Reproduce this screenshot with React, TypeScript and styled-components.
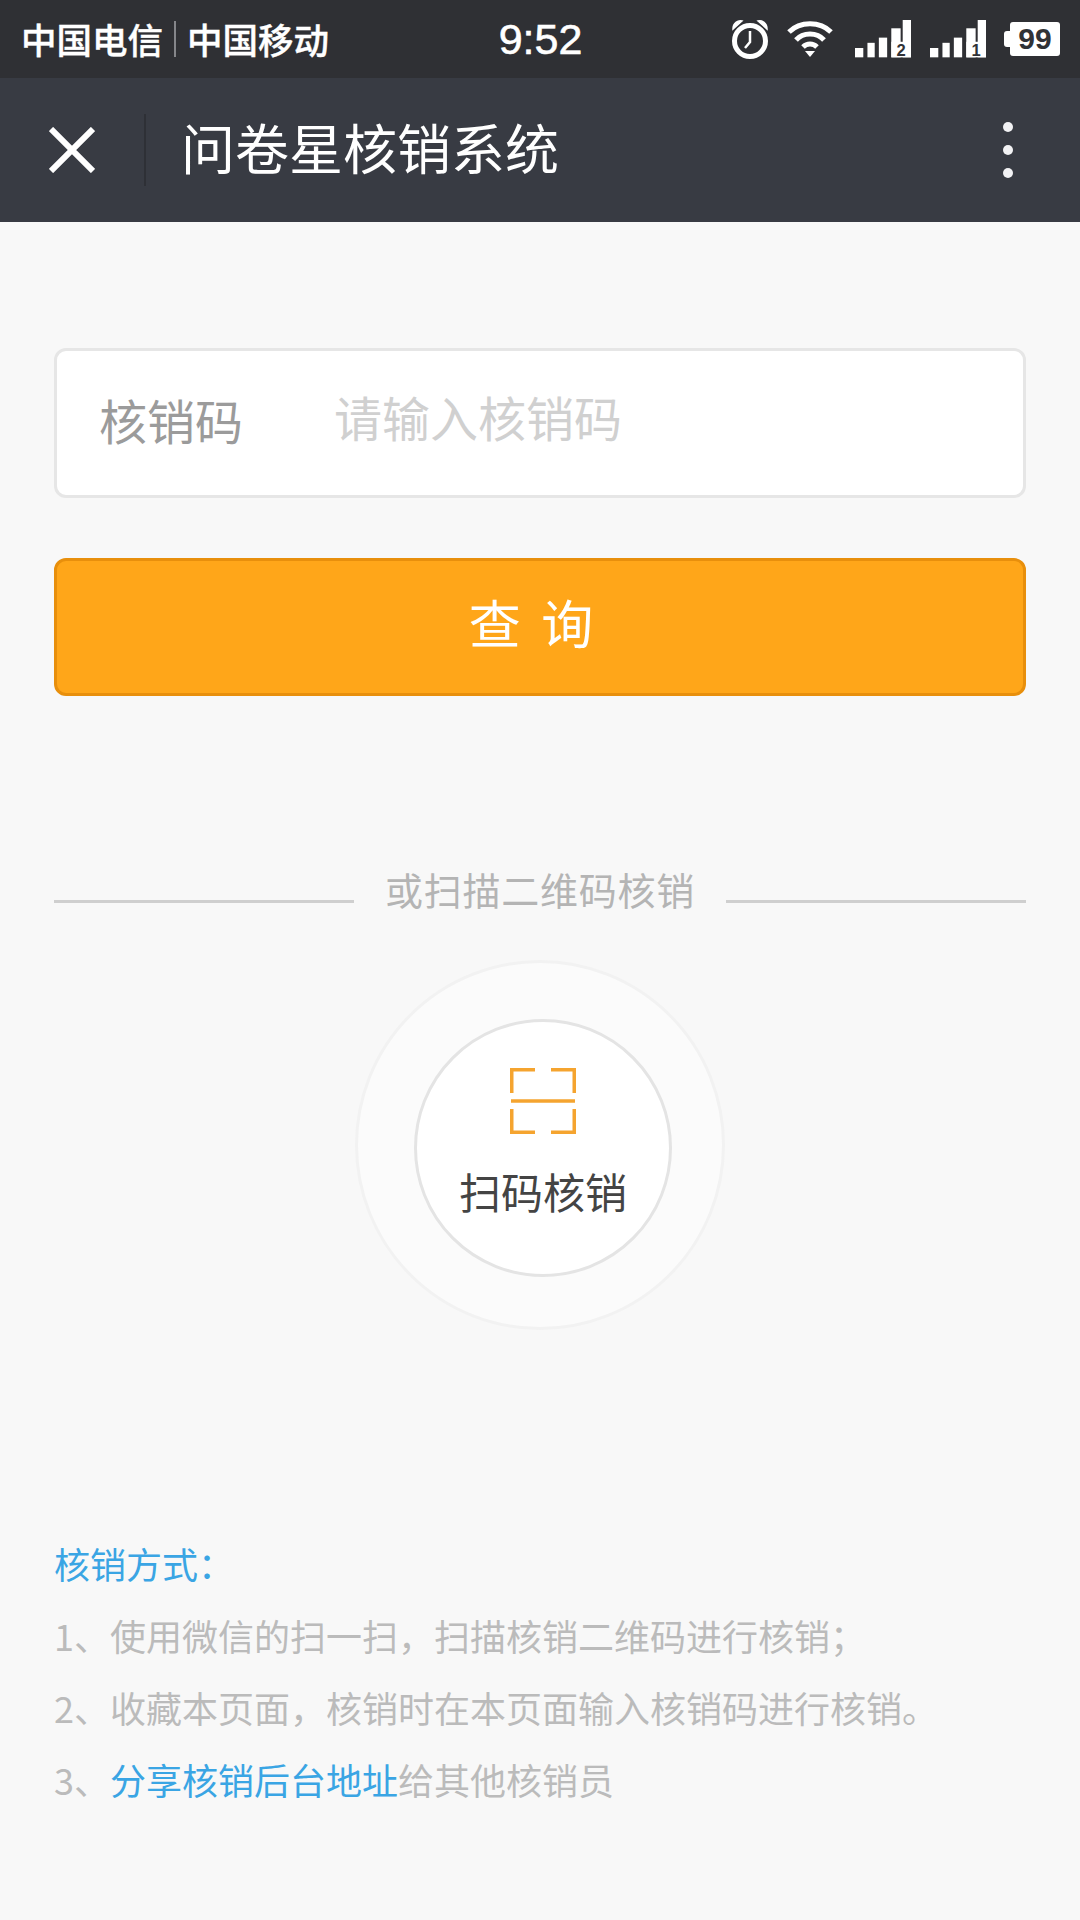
import styled, { createGlobalStyle } from "styled-components"

const GlobalStyle = createGlobalStyle`
  html, body {
    margin: 0;
    padding: 0;
    background: #f8f8f8;
  }
  * {
    box-sizing: border-box;
  }
`

const FONT = `"Noto Sans CJK SC", "Liberation Sans", sans-serif`

const SignalIcon = ({ sim }: { sim: string }) => (
  <svg width="56" height="42" viewBox="0 0 54 40.5">
    <g fill="#fff">
      <rect x="0" y="27" width="8" height="9" />
      <rect x="12" y="22" width="7" height="14" />
      <rect x="23" y="17" width="8" height="19" />
      <rect x="35" y="8" width="9" height="28" />
      <rect x="46" y="0" width="8" height="36" />
      <rect x="35" y="21" width="19" height="15" />
    </g>
    <text x="44.5" y="34.5" textAnchor="middle" fontSize="16" fontWeight="700" fontFamily="Liberation Sans" fill="#303236">
      {sim}
    </text>
  </svg>
)

const AlarmIcon = () => (
  <svg width="38" height="41" viewBox="0 0 38 41" fill="none">
    <circle cx="19" cy="22" r="15.5" stroke="#fff" strokeWidth="5" />
    <path d="M2 10 C2 4 7 1 11 2 Z M36 10 C36 4 31 1 27 2 Z" fill="#fff" stroke="#fff" strokeWidth="1.5" />
    <path d="M19 12 V23 L14 29" stroke="#fff" strokeWidth="2.5" />
  </svg>
)

const WifiIcon = () => (
  <svg width="46" height="38" viewBox="0 0 46 38" fill="none" stroke="#fff" strokeWidth="5">
    <path d="M2 12 C13 1 33 1 44 12" />
    <path d="M9 20 C16 12 30 12 37 20" />
    <path d="M16 27 C20 23 26 23 30 27" />
    <path d="M18 31 H28 L23 37 Z" fill="#fff" stroke="none" />
  </svg>
)

const ScanIcon = () => (
  <svg width="66" height="66" viewBox="0 0 66 66" fill="none" stroke="#f5a42f" strokeWidth="3.5">
    <path d="M25 1.75 H1.75 V25" />
    <path d="M41 1.75 H64.25 V25" />
    <path d="M1 33 H65" />
    <path d="M1.75 41 V64.25 H25" />
    <path d="M64.25 41 V64.25 H41" />
  </svg>
)

const CloseIcon = () => (
  <svg width="46" height="46" viewBox="0 0 46 46" stroke="#fff" strokeWidth="6">
    <path d="M2 2 L44 44 M44 2 L2 44" />
  </svg>
)

const App = () => {
  return (
    <Page>
      <GlobalStyle />
      <StatusBar>
        <Carriers>
          <span>中国电信</span>
          <CarrierLine />
          <span>中国移动</span>
        </Carriers>
        <Clock>9:52</Clock>
        <StatusIcons>
          <AlarmIcon />
          <WifiIcon />
          <SignalGroup>
            <SignalIcon sim="2" />
            <SignalIcon sim="1" />
          </SignalGroup>
          <Battery>
            <BatteryCap />
            <BatteryBody>99</BatteryBody>
          </Battery>
        </StatusIcons>
      </StatusBar>

      <NavBar>
        <CloseIcon />
        <NavLine />
        <NavTitle>问卷星核销系统</NavTitle>
        <MoreDots>
          <Dot />
          <Dot />
          <Dot />
        </MoreDots>
      </NavBar>

      <Main>
        <InputCard>
          <InputLabel>核销码</InputLabel>
          <Placeholder>请输入核销码</Placeholder>
        </InputCard>
        <QueryButton>查 询</QueryButton>

        <Divider>
          <DividerLine />
          <DividerText>或扫描二维码核销</DividerText>
          <DividerLine />
        </Divider>

        <OuterCircle>
          <InnerCircle>
            <ScanIcon />
            <ScanLabel>扫码核销</ScanLabel>
          </InnerCircle>
        </OuterCircle>

        <Notes>
          <NoteLine>
            <Blue>核销方式：</Blue>
          </NoteLine>
          <NoteLine>1、使用微信的扫一扫，扫描核销二维码进行核销；</NoteLine>
          <NoteLine>2、收藏本页面，核销时在本页面输入核销码进行核销。</NoteLine>
          <NoteLine>
            3、<Blue>分享核销后台地址</Blue>给其他核销员
          </NoteLine>
        </Notes>
      </Main>
    </Page>
  )
}

export default App

const Page = styled.div`
  width: 1080px;
  height: 1920px;
  overflow: hidden;
  background: #f8f8f8;
  font-family: ${FONT};
`

const StatusBar = styled.div`
  height: 78px;
  background: #2f3034;
  display: grid;
  grid-template-columns: 1fr auto 1fr;
  align-items: center;
  padding: 0 20px 0 21px;
  color: #fff;
`

const Carriers = styled.div`
  display: flex;
  align-items: center;
  font-size: 35.5px;
  font-weight: 500;
  line-height: 40px;
  -webkit-text-stroke: 0.4px #fff;
`

const CarrierLine = styled.div`
  width: 2px;
  height: 36px;
  margin: 0 11px;
  background: #85868a;
`

const Clock = styled.div`
  font-family: "Liberation Sans", sans-serif;
  font-size: 43px;
  font-weight: 400;
  line-height: 78px;
  -webkit-text-stroke: 0.6px #fff;
`

const StatusIcons = styled.div`
  display: flex;
  align-items: center;
  justify-content: flex-end;
  gap: 18px;
`

const SignalGroup = styled.div`
  display: flex;
  gap: 19px;
  margin: 4px 0 0 4px;
`

const Battery = styled.div`
  display: flex;
  align-items: center;
`

const BatteryCap = styled.div`
  width: 6px;
  height: 16px;
  background: #fff;
  border-radius: 3px 0 0 3px;
`

const BatteryBody = styled.div`
  width: 50px;
  height: 34px;
  border-radius: 3px;
  background: #fff;
  color: #303236;
  font-family: "Liberation Sans", sans-serif;
  font-size: 30px;
  font-weight: 700;
  line-height: 34px;
  text-align: center;
`

const NavBar = styled.div`
  height: 144px;
  background: #383b43;
  display: flex;
  align-items: center;
  padding: 0 67px 0 49px;
`

const NavLine = styled.div`
  width: 2px;
  height: 72px;
  margin: 0 35px 0 49px;
  background: #2e3036;
`

const NavTitle = styled.div`
  font-size: 54px;
  line-height: 72px;
  color: #fff;
  font-weight: 400;
  margin-top: -6px;
`

const MoreDots = styled.div`
  margin-left: auto;
  display: flex;
  flex-direction: column;
  gap: 13px;
`

const Dot = styled.div`
  width: 10px;
  height: 10px;
  border-radius: 50%;
  background: #f2f2f4;
`

const Main = styled.div`
  padding: 126px 54px 0;
`

const InputCard = styled.div`
  height: 150px;
  background: #fff;
  border: 3px solid #e6e6e6;
  border-radius: 12px;
  display: flex;
  align-items: center;
  padding-left: 42px;
`

const InputLabel = styled.div`
  width: 235px;
  font-size: 48px;
  line-height: 60px;
  color: #9b9b9b;
  margin-top: -9px;
`

const Placeholder = styled.div`
  font-size: 48px;
  line-height: 60px;
  color: #d0d0d0;
  margin-top: -14px;
`

const QueryButton = styled.div`
  height: 138px;
  margin-top: 60px;
  background: #ffa619;
  border: 3px solid #e88f0c;
  border-radius: 12px;
  color: #fff;
  font-size: 52px;
  line-height: 122px;
  text-align: center;
  word-spacing: 9px;
  padding-right: 18px;
`

const Divider = styled.div`
  display: flex;
  align-items: center;
  margin-top: 163px;
  gap: 31px;
`

const DividerLine = styled.div`
  flex: 1;
  height: 3px;
  margin-top: 24px;
  background: #cfcfcf;
`

const DividerText = styled.div`
  font-size: 38px;
  letter-spacing: 0.75px;
  line-height: 60px;
  color: #b4b4b4;
`

const OuterCircle = styled.div`
  width: 370px;
  height: 370px;
  margin: 41px auto 0;
  border: 3px solid #f2f2f2;
  border-radius: 50%;
  background: #fbfbfb;
  display: flex;
  align-items: center;
  justify-content: center;
  padding: 6px 0 0 6px;
`

const InnerCircle = styled.div`
  width: 258px;
  height: 258px;
  border: 3px solid #e4e4e4;
  border-radius: 50%;
  background: #fff;
  display: flex;
  flex-direction: column;
  align-items: center;
  padding-top: 46px;
`

const ScanLabel = styled.div`
  margin-top: 29px;
  font-size: 42px;
  line-height: 56px;
  color: #444;
`

const Notes = styled.div`
  margin-top: 197px;
  font-size: 36px;
  line-height: 72px;
  color: #bbbbbb;
`

const NoteLine = styled.div`
  white-space: nowrap;
`

const Blue = styled.span`
  color: #3aa5e4;
`
